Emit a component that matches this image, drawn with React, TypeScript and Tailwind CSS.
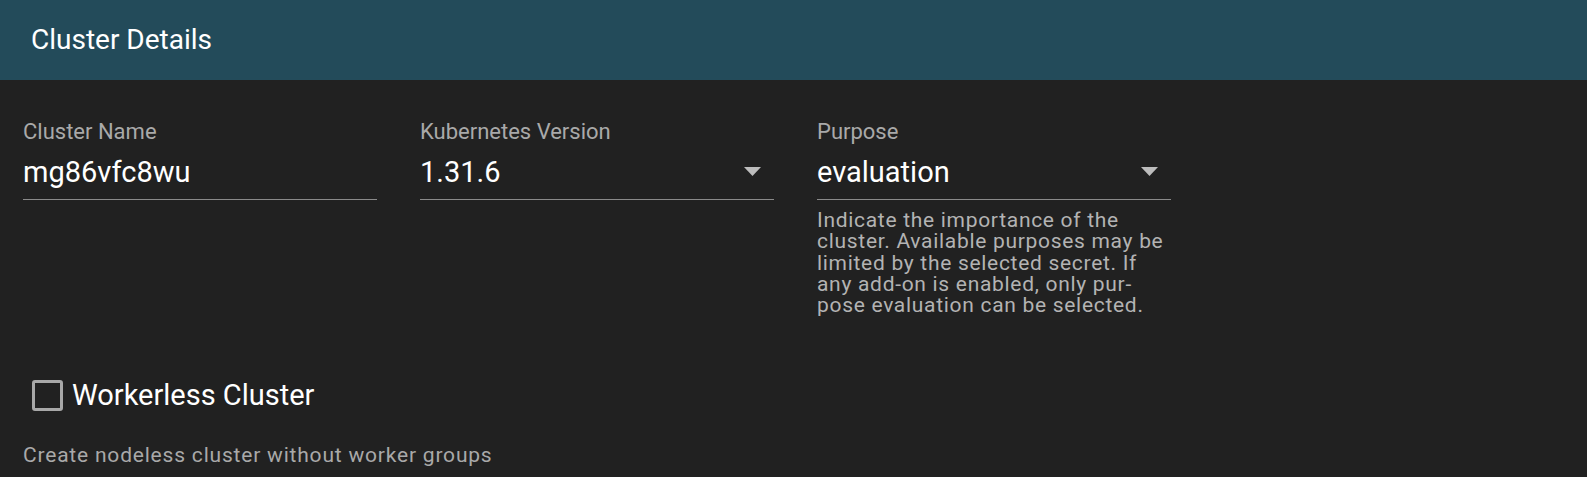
import React from "react";

const FONT = { fontFamily: "Roboto, 'Liberation Sans', sans-serif" };

function Caret() {
  return (
    <svg width="17" height="9" viewBox="0 0 17 9" className="shrink-0">
      <path d="M0 0 L17 0 L8.5 9 Z" fill="#bdbdbd" />
    </svg>
  );
}

function Field({ label, value, select }: { label: string; value: string; select?: boolean }) {
  return (
    <div className="w-[354px]">
      <div className="text-[22px] leading-[26px] text-[#a9a9a9]">{label}</div>
      <div className="mt-[8px] flex h-[47px] items-center justify-between border-b border-[#8a8a8a] pb-[9px] pr-[13px]">
        <span className="text-[29px] leading-[34px] text-white">{value}</span>
        {select && <Caret />}
      </div>
    </div>
  );
}

const HELP = [
  "Indicate the importance of the",
  "cluster. Available purposes may be",
  "limited by the selected secret. If",
  "any add-on is enabled, only pur-",
  "pose evaluation can be selected.",
];

export default function App() {
  return (
    <div className="h-[477px] w-[1587px] overflow-hidden bg-[#212121]" style={FONT}>
      <div className="flex h-[80px] items-center bg-[#234b5a] pl-[31px]">
        <span className="text-[28px] text-white">Cluster Details</span>
      </div>

      <div className="pl-[23px] pt-[39px]">
        <div className="flex gap-[43px]">
          <Field label="Cluster Name" value="mg86vfc8wu" />
          <Field label="Kubernetes Version" value="1.31.6" select />
          <div className="w-[354px]">
            <Field label="Purpose" value="evaluation" select />
            <p className="mt-[10px] text-[21px] leading-[21.3px] tracking-[0.7px] text-[#b3b3b3]">
              {HELP.map((line) => (
                <span key={line} className="block whitespace-nowrap">
                  {line}
                </span>
              ))}
            </p>
          </div>
        </div>

        <div className="mt-[62px] flex h-[34px] items-center gap-[9px] pl-[9px]">
          <div className="h-[31px] w-[31px] rounded-[3px] border-[3px] border-[#a8a8a8]" />
          <span className="text-[29px] leading-[34px] text-white">Workerless Cluster</span>
        </div>

        <div className="mt-[31px] text-[21px] leading-[25px] tracking-[0.8px] text-[#a9a9a9]">
          Create nodeless cluster without worker groups
        </div>
      </div>
    </div>
  );
}
